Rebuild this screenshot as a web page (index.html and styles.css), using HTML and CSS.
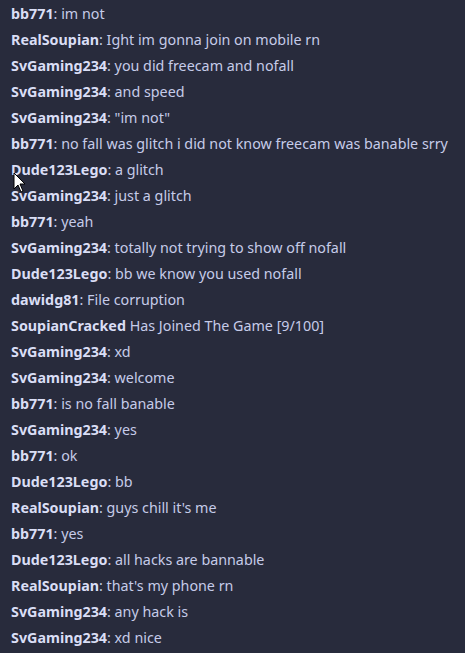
FILE: index.html
```html
<!DOCTYPE html>
<html>
<head>
<meta charset="utf-8">
<link rel="stylesheet" href="styles.css">
</head>
<body>
<div class="chat">
  <div class="msg"><b class="name">bb771</b>: im not</div>
  <div class="msg"><b class="name">RealSoupian</b>: Ight im gonna join on mobile rn</div>
  <div class="msg"><b class="name">SvGaming234</b>: you did freecam and nofall</div>
  <div class="msg"><b class="name">SvGaming234</b>: and speed</div>
  <div class="msg"><b class="name">SvGaming234</b>: "im not"</div>
  <div class="msg"><b class="name">bb771</b>: no fall was glitch i did not know freecam was banable srry</div>
  <div class="msg"><b class="name">Dude123Lego</b>: a glitch</div>
  <div class="msg"><b class="name">SvGaming234</b>: just a glitch</div>
  <div class="msg"><b class="name">bb771</b>: yeah</div>
  <div class="msg"><b class="name">SvGaming234</b>: totally not trying to show off nofall</div>
  <div class="msg"><b class="name">Dude123Lego</b>: bb we know you used nofall</div>
  <div class="msg"><b class="name">dawidg81</b>: File corruption</div>
  <div class="msg"><b class="name">SoupianCracked</b> Has Joined The Game [9/100]</div>
  <div class="msg"><b class="name">SvGaming234</b>: xd</div>
  <div class="msg"><b class="name">SvGaming234</b>: welcome</div>
  <div class="msg"><b class="name">bb771</b>: is no fall banable</div>
  <div class="msg"><b class="name">SvGaming234</b>: yes</div>
  <div class="msg"><b class="name">bb771</b>: ok</div>
  <div class="msg"><b class="name">Dude123Lego</b>: bb</div>
  <div class="msg"><b class="name">RealSoupian</b>: guys chill it's me</div>
  <div class="msg"><b class="name">bb771</b>: yes</div>
  <div class="msg"><b class="name">Dude123Lego</b>: all hacks are bannable</div>
  <div class="msg"><b class="name">RealSoupian</b>: that's my phone rn</div>
  <div class="msg"><b class="name">SvGaming234</b>: any hack is</div>
  <div class="msg"><b class="name">SvGaming234</b>: xd nice</div>
</div>
<svg class="cursor" width="14" height="22" viewBox="0 0 14 22">
  <path d="M1 1 L1 17 L5 13 L8 20 L10 19 L7 12 L12 12 Z" fill="#fff" stroke="#000" stroke-width="1"/>
</svg>
</body>
</html>
```
FILE: styles.css
```css
html, body {
  margin: 0;
  padding: 0;
  background: #282b3c;
}
body {
  width: 465px;
  height: 653px;
  overflow: hidden;
  position: relative;
}
.chat {
  display: flex;
  flex-direction: column;
  padding-top: 1px;
  padding-left: 11px;
  font-family: "Noto Sans", "Open Sans", sans-serif;
  font-size: 14.3px;
  line-height: 26px;
  color: #c6cbe9;
}
.msg {
  white-space: nowrap;
}
.name {
  font-weight: 700;
  color: #dadef5;
}
.cursor {
  position: absolute;
  left: 13px;
  top: 172px;
}
```
